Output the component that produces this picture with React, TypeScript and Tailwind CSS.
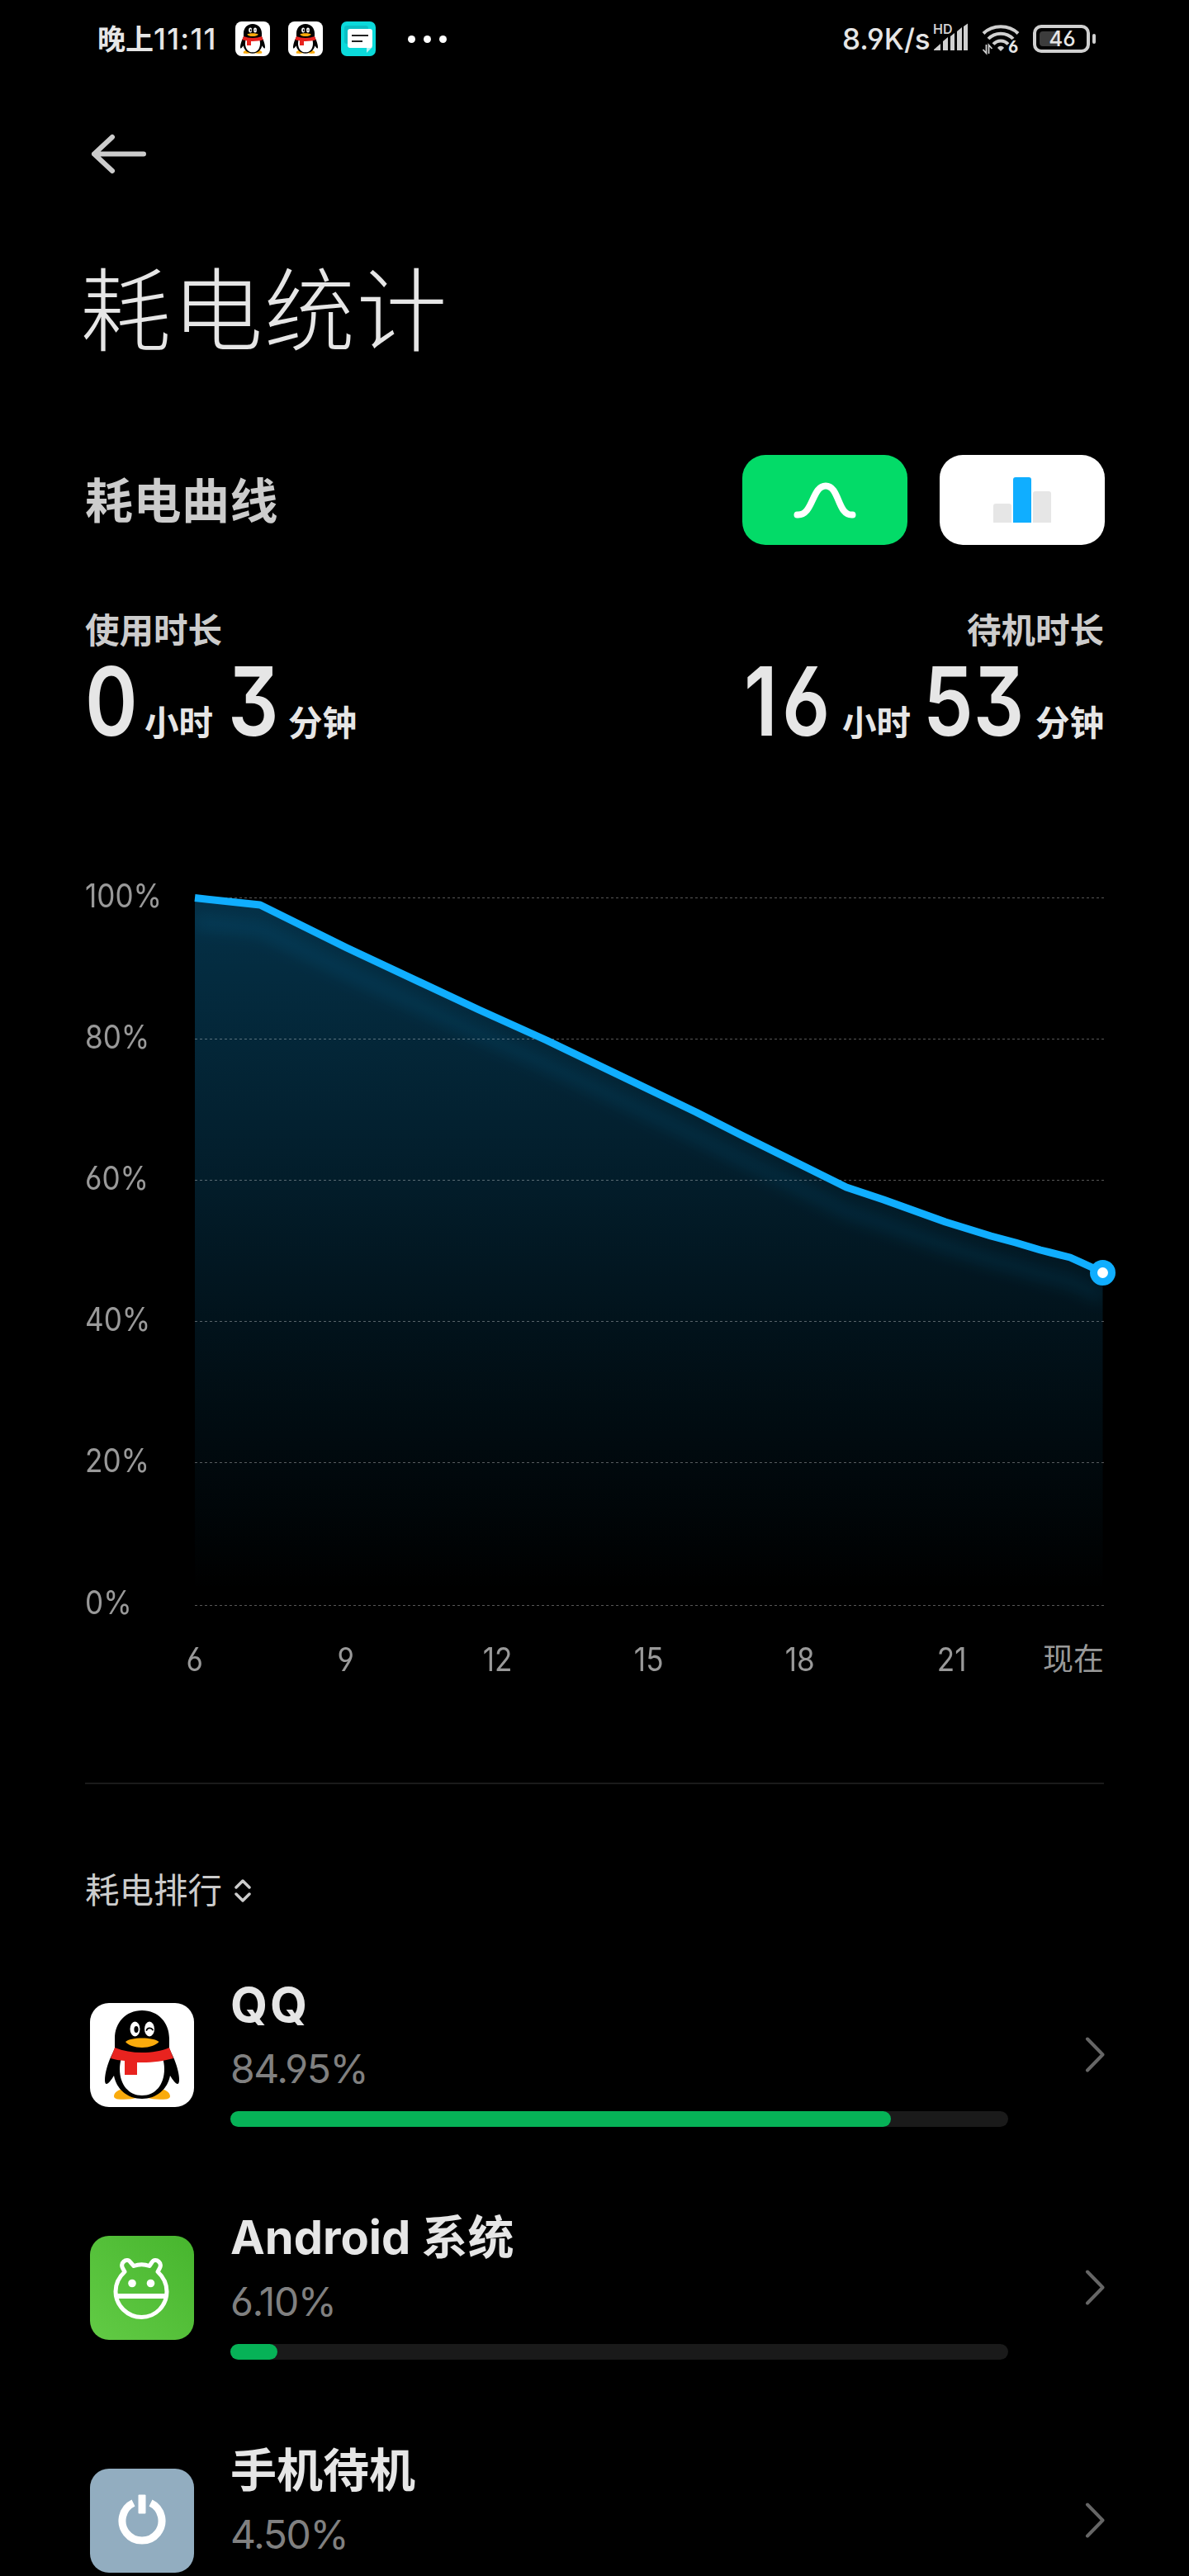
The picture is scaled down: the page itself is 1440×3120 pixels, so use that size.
import type { ReactNode } from "react";

// Battery level over time, in chart pixels (x: 0 - 1100, y: 0 = 100%)
const LEVELS = [
  [0, 0.5], [79, 9], [184, 61], [344, 136], [426, 173], [607, 260], [664, 289], [789, 351],
  [834, 366], [909, 393], [964, 410], [994, 418], [1024, 427], [1060, 436], [1099.5, 454],
];

const GRID = [
  { label: "100%", y: 0 },
  { label: "80%", y: 171 },
  { label: "60%", y: 342 },
  { label: "40%", y: 513 },
  { label: "20%", y: 684 },
  { label: "0%", y: 857 },
];

const HOURS = ["6", "9", "12", "15", "18", "21"];

function QQIcon({ className }: { className: string }) {
  return (
    <svg viewBox="0 0 126 126" className={className}>
      <rect width="126" height="126" rx="23" fill="#fff" />
      <path d="M29 113c0-5 6-9 14-9h40c8 0 14 4 14 9 0 2-2 3-5 3.500C84 117 76 117 63 113.500 50 117 42 117 34 116.500c-3-.5-5-1.500-5-3.500z" fill="#faab0c" />
      <path d="M63 9c-20 0-33 15-33 34v12l-6 13c-4 10-6 19-6 25 0 4 1 5 2 5 2 0 6-5 9-10 3 16 16 28 34 28s31-12 34-28c3 5 7 10 9 10 1 0 2-1 2-5 0-6-2-15-6-25l-6-13V43C96 24 83 9 63 9z" fill="#000" />
      <path d="M38 66c-1 4-2 9-2 14 0 19 11 32 27 32s27-13 27-32c0-5-1-10-2-14z" fill="#fff" />
      <path d="M30 54c10 4 21 6 33 6s24-2 33-6l5 13c-11 3-24 5-38 5-2 0-4 0-6 0v15H42V70c-6-.5-12-1.500-17-3z" fill="#e8231f" />
      <ellipse cx="54.500" cy="31.500" rx="6" ry="9" fill="#fff" />
      <ellipse cx="72" cy="31.500" rx="6" ry="9" fill="#fff" />
      <ellipse cx="56" cy="32" rx="2.600" ry="4" fill="#000" />
      <path d="M68.500 33c1-3.500 6-3.500 7.500-.5" stroke="#000" strokeWidth="1.800" fill="none" strokeLinecap="round" />
      <path d="M43 47c3-3 11-4.500 20-4.500S80 44 83.500 47C80 51 72 54 63 54s-17-3-20-7z" fill="#faab0c" />
    </svg>
  );
}

function AndroidIcon({ className }: { className: string }) {
  return (
    <svg viewBox="0 0 126 126" className={className} fill="none">
      <defs>
        <linearGradient id="android" x1="0" y1="1" x2="1" y2="0">
          <stop offset="0" stopColor="#62cb45" />
          <stop offset="1" stopColor="#47b52e" />
        </linearGradient>
      </defs>
      <rect width="126" height="126" rx="23" fill="url(#android)" />
      <path
        d="M53 36.500c6-2.200 13-2.200 19 0l3-4.500c2-3.500 6-3 8-1 2.500 2.200 3 5 1.500 8L82 43.500c6.500 6 11 14 11 24 0 17-13.500 31-30.500 31S31 84.500 31 67.500c0-10 4.500-18 11-24L39.500 39c-1.500-3-1-5.800 1.500-8 2-2 6-2.500 8 1z"
        stroke="#fff" strokeWidth="5" strokeLinejoin="round"
      />
      <path d="M32 73h61" stroke="#fff" strokeWidth="6" />
      <circle cx="51" cy="57.500" r="4.800" fill="#fff" />
      <circle cx="73.500" cy="57.500" r="4.800" fill="#fff" />
    </svg>
  );
}

function StandbyIcon({ className }: { className: string }) {
  return (
    <svg viewBox="0 0 126 126" className={className} fill="none">
      <rect width="126" height="126" rx="23" fill="#92adc0" />
      <path d="M52.500 41.500a24 24 0 1 0 21 0" stroke="#fff" strokeWidth="9" />
      <rect x="58.500" y="31.500" width="9" height="23" rx="1" fill="#fff" />
    </svg>
  );
}

function MessageIcon() {
  return (
    <svg viewBox="0 0 42 42" className="size-[42px]">
      <rect width="42" height="42" rx="7" fill="#0bdadb" />
      <path d="M4 8a3 3 0 0 1 3-3h23a3 3 0 0 1 3 3v19H7a3 3 0 0 1-3-3z" fill="#0bbfc4" />
      <path d="M31 31h7l-7 7z" fill="#b4f3f3" />
      <rect x="8" y="9" width="30" height="23" rx="3" fill="#fff" />
      <path d="M13 17h20M13 24h13" stroke="#222" strokeWidth="2" />
    </svg>
  );
}

function StatusBar() {
  return (
    <header className="flex h-[94px] items-center justify-between pl-[118px] pr-[113px]">
      <div className="flex items-center">
        <span className="w-[167px] whitespace-nowrap text-[34px] font-semibold leading-[42px] text-[#e6e6e6]">
          晚上<span className="text-[36px] font-medium tracking-[1.2px]">11:11</span>
        </span>
        <div className="flex gap-[22px]">
          <QQIcon className="size-[42px]" />
          <QQIcon className="size-[42px]" />
          <MessageIcon />
        </div>
        <div className="ml-[39px] flex gap-[10px]">
          <i className="size-[9px] rounded-full bg-white" />
          <i className="size-[9px] rounded-full bg-white" />
          <i className="size-[9px] rounded-full bg-white" />
        </div>
      </div>
      <div className="flex items-center">
        <span className="w-[110px] whitespace-nowrap text-[35px] font-medium leading-[42px] text-[#e6e6e6]">8.9K/s</span>
        <svg viewBox="0 0 44 38" className="h-[38px] w-[44px] overflow-visible" fill="#d0d0d0">
          <text x="0" y="13" fontSize="16" fontWeight="600" fontFamily="Inter">HD</text>
          <path d="M1 33v-1l8-7v8zM12 33V22l6-5v16zM21 33V16l5-4v21zM29 33V10l6-5v28zM37 33V4l5-3.500v32.500z" />
        </svg>
        <svg viewBox="0 0 46 38" className="ml-[15px] h-[38px] w-[46px] overflow-visible" fill="none" stroke="#d0d0d0">
          <path d="M2 12.500C13 1.500 33 1.500 44 12.500" strokeWidth="4" />
          <path d="M8 19c8-8.500 22-8.500 30 0" strokeWidth="4" />
          <path d="M14 25.500c5-5.500 13-5.500 18 0" strokeWidth="4" />
          <path d="M19 30c2-3 6-3 8 0l-4 4z" fill="#d0d0d0" stroke="none" />
          <path d="M5.500 26v10.500L1.500 32M8.500 37V26.500l4 4.500" strokeWidth="1.800" />
          <text x="32" y="35.500" fontSize="20" fontWeight="700" fontFamily="Inter" fill="#e6e6e6" stroke="#000" strokeWidth="3" paintOrder="stroke">6</text>
        </svg>
        <div className="ml-[16px] flex items-center gap-[3px]">
          <div className="relative flex h-[34px] w-[69px] items-center justify-center rounded-[10px] border-4 border-[#d0d0d0]">
            <div className="absolute left-[4px] top-[4px] h-[18px] w-[24px] rounded-[4px] bg-[#3c3c3c]" />
            <span className="relative pl-[2px] text-[26px] font-medium leading-none text-[#e6e6e6]">46</span>
          </div>
          <div className="h-[12px] w-[4px] rounded-full bg-[#d0d0d0]" />
        </div>
      </div>
    </header>
  );
}

function Digits({ value, className }: { value: string; className: string }) {
  return (
    <span className={className}>
      <span className="inline-block origin-left scale-x-[0.84] text-[115px] font-semibold">{value}</span>
    </span>
  );
}

function Duration({ children }: { children: ReactNode }) {
  return (
    <div className="mt-[6px] flex h-[100px] items-baseline whitespace-nowrap text-[41.500px] font-semibold leading-[100px] text-[#e6e6e6]">
      {children}
    </div>
  );
}

function BatteryChart() {
  const line = LEVELS.map(([x, y]) => `${x},${y}`).join(" ");
  return (
    <section className="mt-[187px] text-[39px] leading-[48px] text-[#999]">
      <div className="flex h-[858px]">
        <div className="w-[133px] shrink-0 origin-left scale-x-[0.9]">
          {GRID.map((g, i) => (
            <div key={g.label} className={i === 0 ? "-mt-[26px] h-[171px]" : i === 4 ? "h-[172px]" : i === 5 ? "h-[48px]" : "h-[171px]"}>
              {g.label}
            </div>
          ))}
        </div>
        <svg viewBox="0 0 1100 858" className="h-[858px] w-[1100px] shrink-0 overflow-visible" fill="none">
          <defs>
            <linearGradient id="fill" x1="0" y1="0" x2="0" y2="840" gradientUnits="userSpaceOnUse">
              <stop offset="0" stopColor="#10aeff" stopOpacity="0.28" />
              <stop offset="1" stopColor="#10aeff" stopOpacity="0" />
            </linearGradient>
            <filter id="glow" x="-10%" y="-20%" width="120%" height="150%">
              <feGaussianBlur stdDeviation="9" />
            </filter>
            <clipPath id="area">
              <polygon points={`${line} 1099.5,858 0,858`} />
            </clipPath>
          </defs>
          <polygon points={`${line} 1099.5,840 0,840`} fill="url(#fill)" />
          <g clipPath="url(#area)">
            <polyline points={line} transform="translate(0 29)" stroke="#10aeff" strokeOpacity="0.11" strokeWidth="14" filter="url(#glow)" />
          </g>
          {GRID.map((g) => (
            <path key={g.y} d={`M0 ${g.y + 0.5}h1101`} stroke="#fff" strokeOpacity="0.34" strokeDasharray="3 3" />
          ))}
          <polyline points={line} stroke="#10aeff" strokeWidth="9" strokeLinejoin="round" />
          <circle cx="1099.500" cy="454.500" r="15.500" fill="#10aeff" />
          <circle cx="1099.500" cy="454.500" r="6.500" fill="#fff" />
        </svg>
      </div>
      <div className="mt-[41px] flex pl-[41px]">
        {HOURS.map((h) => (
          <span key={h} className="w-[183.500px] scale-x-[0.9] text-center">{h}</span>
        ))}
        <span className="-ml-[10px] w-[103px] whitespace-nowrap text-right text-[37px]">现在</span>
      </div>
    </section>
  );
}

function AppRow({ icon, name, percent, value }: { icon: ReactNode; name: ReactNode; percent: string; value: number }) {
  return (
    <div className="flex h-[282px] items-start">
      <div className="ml-[6px] mt-[35px] shrink-0">{icon}</div>
      <div className="ml-[44px] w-[942px] shrink-0">
        <div className="h-[72px] whitespace-nowrap pt-px text-[56px] font-bold leading-[72px] text-[#e6e6e6]">{name}</div>
        <div className="mt-[9px] h-[68px] text-[48px] leading-[68px] tracking-[-1.400px] text-[#808080]">{percent}</div>
        <div className="mt-[17px] h-[19px] rounded-full bg-[#1a1a1a]">
          <div className="h-full rounded-full bg-[#06b257]" style={{ width: `${value}%` }} />
        </div>
      </div>
      <svg viewBox="0 0 24 44" className="ml-[93px] mt-[75px] h-[44px] w-[24px] shrink-0" fill="none">
        <path d="M3 3.500 21.500 22.500 3 41.500" stroke="#666" strokeWidth="4" strokeLinecap="round" strokeLinejoin="round" />
      </svg>
    </div>
  );
}

export default function App() {
  return (
    <div className="h-[3120px] w-[1440px] overflow-hidden bg-black font-['Inter','Noto_Sans_CJK_SC',sans-serif] [font-feature-settings:'cv03','cv04','cv09']">
      <StatusBar />

      <main className="px-[103px]">
        <svg viewBox="0 0 70 50" className="ml-[6px] mt-[67px] h-[50px] w-[70px]" fill="none">
          <path d="M27 5 5 25.500 27 46M5 25.500h60" stroke="#ccc" strokeWidth="6" strokeLinecap="round" strokeLinejoin="round" />
        </svg>

        <h1 className="-ml-[6px] mt-[96px] whitespace-nowrap text-[110px] font-light leading-[140px] tracking-[1.500px] text-[#e6e6e6]">耗电统计</h1>

        {/* Curve / bar chart switch */}
        <div className="mt-[104px] flex h-[109px] items-center">
          <h2 className="mr-auto whitespace-nowrap pt-[3px] text-[58px] font-bold leading-[80px] tracking-[0.5px] text-[#ccc]">耗电曲线</h2>
          <button className="flex h-[109px] w-[200px] items-center justify-center rounded-[28px] bg-[#03db68]">
            <svg viewBox="0 0 76 44" className="h-[44px] w-[76px]" fill="none">
              <path d="M4.500 39.500C24 41 22 4.500 39 4.500S53 41 71.500 39.500" stroke="#fff" strokeWidth="8" strokeLinecap="round" />
            </svg>
          </button>
          <button className="-mr-px ml-[39px] flex h-[109px] w-[200px] items-center justify-center rounded-[28px] bg-white">
            <span className="flex h-[55px] items-end gap-[2px]">
              <i className="h-[23px] w-[22px] rounded-t-[3px] bg-[#e6e6e6]" />
              <i className="h-[55px] w-[22px] rounded-t-[3px] bg-[#10aeff]" />
              <i className="h-[38px] w-[22px] rounded-t-[3px] bg-[#e6e6e6]" />
            </span>
          </button>
        </div>

        <div className="mt-[74px] flex justify-between">
          <div>
            <div className="text-[41.500px] font-semibold leading-[60px] text-[#ccc]">使用时长</div>
            <Duration>
              <Digits value="0" className="w-[62px]" />
              <span className="ml-[10px]">小时</span>
              <Digits value="3" className="ml-[18px] w-[62px]" />
              <span className="ml-[11px]">分钟</span>
            </Duration>
          </div>
          <div className="flex flex-col items-end">
            <div className="text-[41.500px] font-semibold leading-[60px] text-[#ccc]">待机时长</div>
            <Duration>
              <Digits value="16" className="w-[107px] tracking-[6px]" />
              <span className="ml-[12px]">小时</span>
              <Digits value="53" className="ml-[15px] w-[123px]" />
              <span className="ml-[13px]">分钟</span>
            </Duration>
          </div>
        </div>

        <BatteryChart />

        <hr className="mt-[125px] border-t-2 border-[#1a1a1a]" />

        <div className="mt-[99px] flex h-[60px] items-center text-[41.500px] leading-[60px] text-[#ccc]">
          耗电排行
          <svg viewBox="0 0 20 30" className="ml-[15px] h-[30px] w-[20px]" fill="none">
            <path d="M2 11 10 3l8 8M2 19l8 8 8-8" stroke="#ccc" strokeWidth="3.500" strokeLinecap="round" strokeLinejoin="round" />
          </svg>
        </div>

        <div className="mt-[71px]">
          <AppRow icon={<QQIcon className="size-[126px]" />} name={<span className="text-[58px] tracking-[3px]">QQ</span>} percent="84.95%" value={84.95} />
          <AppRow icon={<AndroidIcon className="size-[126px]" />} name="Android 系统" percent="6.10%" value={6.1} />
          <AppRow icon={<StandbyIcon className="size-[126px]" />} name="手机待机" percent="4.50%" value={4.5} />
        </div>
      </main>
    </div>
  );
}
